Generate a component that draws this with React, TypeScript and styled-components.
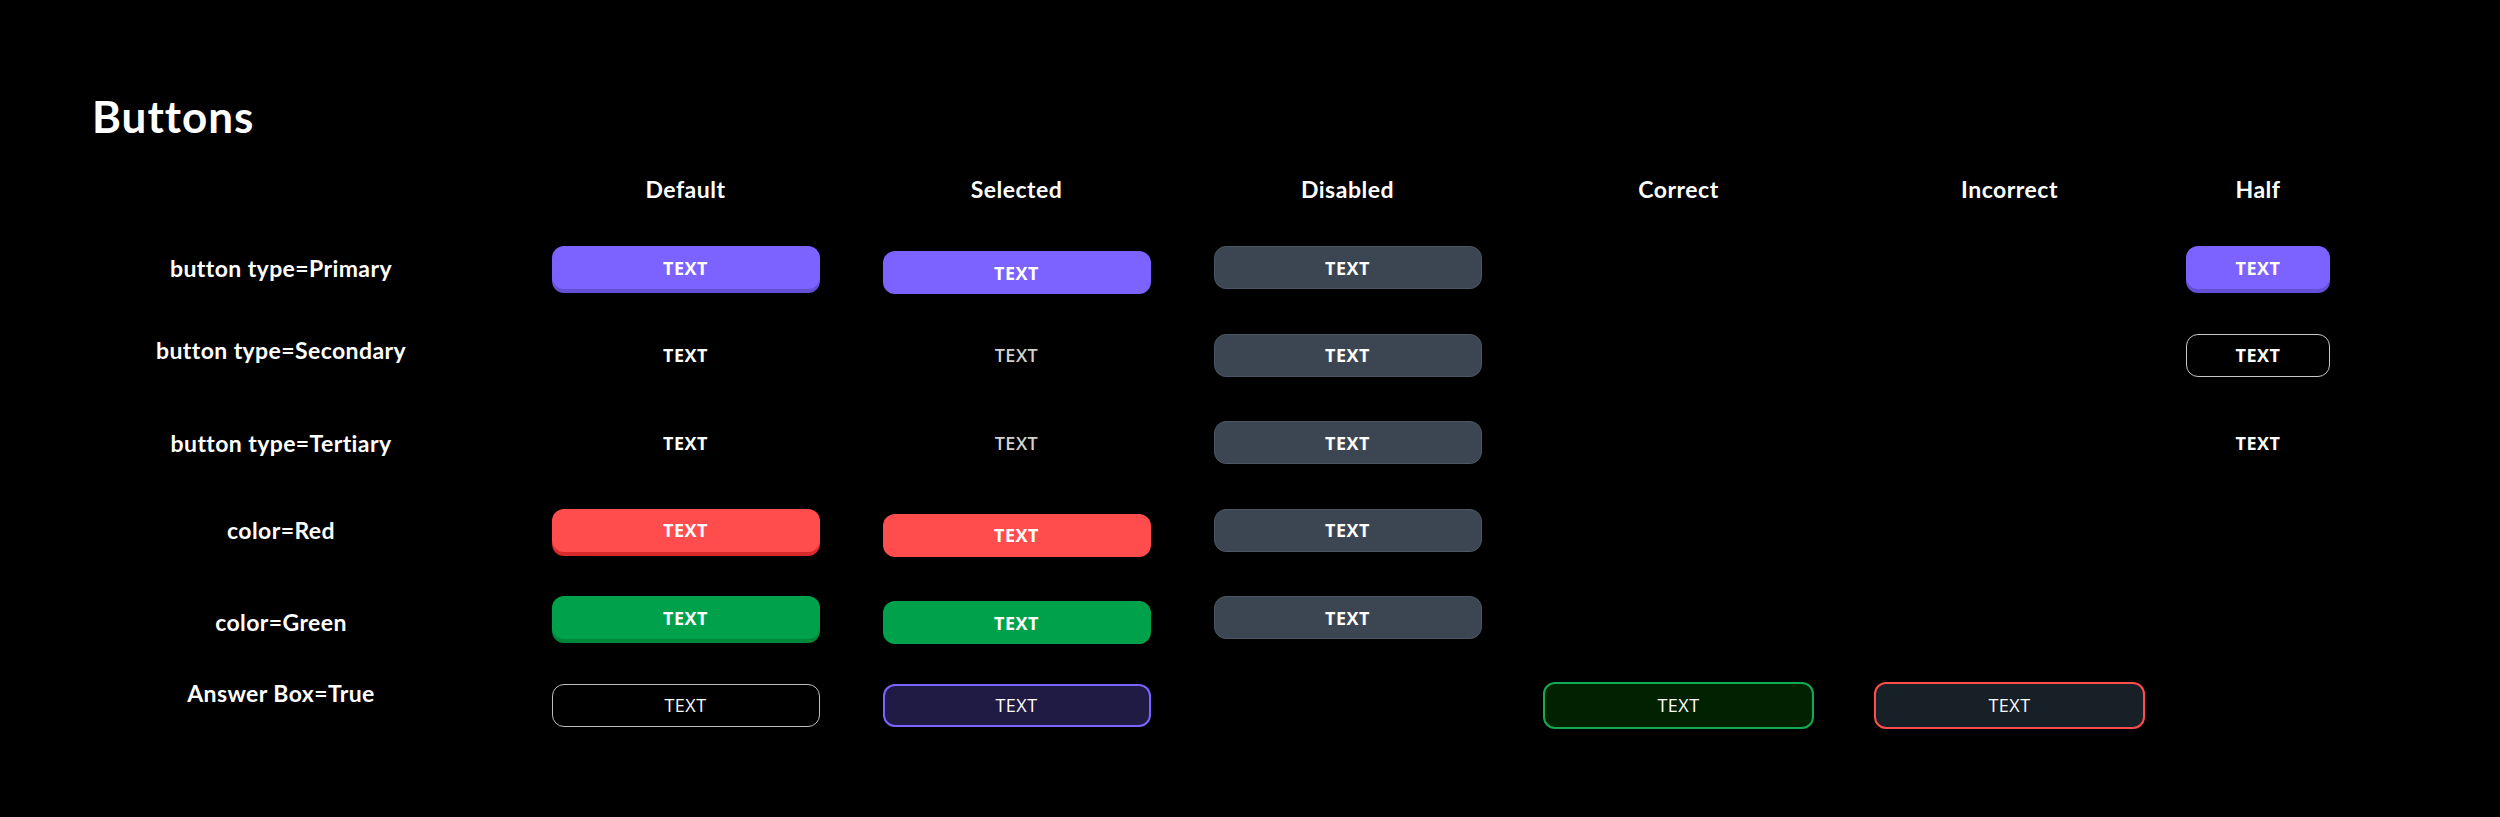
import { Fragment } from 'react';
import styled, { createGlobalStyle, css } from 'styled-components';

const GlobalStyle = createGlobalStyle`
  html, body {
    margin: 0;
    padding: 0;
    background: #000;
  }
  body {
    font-family: Lato, "Noto Sans", sans-serif;
    color: #fff;
  }
`;

type Tone = 'primary' | 'red' | 'green';
type Variant =
  | 'solid'
  | 'pressed'
  | 'disabled'
  | 'ghost'
  | 'ghostSelected'
  | 'outline'
  | 'answer'
  | 'answerSelected'
  | 'answerCorrect'
  | 'answerIncorrect';

const tones: Record<Tone, { face: string; edge: string }> = {
  primary: { face: '#7c63ff', edge: '#6450d4' },
  red: { face: '#ff4d4d', edge: '#d82a2a' },
  green: { face: '#00a14b', edge: '#00883a' },
};

const Page = styled.div`
  width: 2500px;
  min-height: 817px;
  padding-top: 94px;
  box-sizing: border-box;
`;

const Title = styled.h1`
  margin: 0 0 16px 92px;
  font-size: 44px;
  line-height: 44px;
  font-weight: 700;
  letter-spacing: 1px;
`;

const Grid = styled.div`
  margin-left: 42px;
  display: grid;
  grid-template-columns: 478px repeat(5, 331px) 166px;
  grid-template-rows: 70px repeat(6, 87.5px);
  align-items: center;
  justify-items: center;
`;

const ColumnHead = styled.div`
  font-size: 23px;
  font-weight: 700;
  letter-spacing: 0.5px;
`;

const RowLabel = styled.div<{ $shift?: number }>`
  font-size: 23px;
  font-weight: 700;
  letter-spacing: 0.4px;
  margin-bottom: ${p => (p.$shift ?? 0) * 2}px;
`;

const Cell = styled.div``;

const Button = styled.div<{ $variant: Variant; $tone?: Tone; $half?: boolean }>`
  box-sizing: border-box;
  width: ${p => (p.$half ? '144px' : '268px')};
  height: 43px;
  border-radius: 12px;
  display: flex;
  align-items: center;
  justify-content: center;
  font-family: "Open Sans", "Noto Sans", sans-serif;
  font-size: 18px;
  font-weight: 700;
  letter-spacing: 0.5px;
  color: #fff;

  ${p => {
    const t = tones[p.$tone ?? 'primary'];
    switch (p.$variant) {
      case 'solid':
        return css`
          background: ${t.face};
          box-shadow: 0 4px 0 ${t.edge};
        `;
      case 'pressed':
        return css`
          background: ${t.face};
          transform: translateY(5px);
        `;
      case 'disabled':
        return css`
          background: #3b4652;
          border: 1px solid #4a5663;
        `;
      case 'ghost':
        return css`
          background: transparent;
        `;
      case 'ghostSelected':
        return css`
          background: transparent;
          color: #d2d2d2;
          font-weight: 600;
        `;
      case 'outline':
        return css`
          background: #000;
          border: 1px solid #c8c8c8;
        `;
      case 'answer':
        return css`
          font-weight: 400;
          background: #000;
          border: 1px solid #bdbdbd;
        `;
      case 'answerSelected':
        return css`
          font-weight: 400;
          background: #201b45;
          border: 2px solid #7b63ff;
        `;
      case 'answerCorrect':
        return css`
          font-weight: 400;
          width: 271px;
          height: 47px;
          background: #012200;
          border: 2.5px solid #12ab4f;
        `;
      case 'answerIncorrect':
        return css`
          font-weight: 400;
          width: 271px;
          height: 47px;
          background: #172027;
          border: 2.5px solid #ff4d4d;
        `;
    }
  }}
`;

const columns = ['Default', 'Selected', 'Disabled', 'Correct', 'Incorrect', 'Half'];

interface Spec {
  variant: Variant;
  tone?: Tone;
}

interface RowSpec {
  label: string;
  // how far the label sits above the row's centre line
  shift?: number;
  cells: (Spec | null)[];
}

const rows: RowSpec[] = [
  {
    label: 'button type=Primary',
    cells: [
      { variant: 'solid' },
      { variant: 'pressed' },
      { variant: 'disabled' },
      null,
      null,
      { variant: 'solid' },
    ],
  },
  {
    label: 'button type=Secondary',
    shift: 5,
    cells: [
      { variant: 'ghost' },
      { variant: 'ghostSelected' },
      { variant: 'disabled' },
      null,
      null,
      { variant: 'outline' },
    ],
  },
  {
    label: 'button type=Tertiary',
    cells: [
      { variant: 'ghost' },
      { variant: 'ghostSelected' },
      { variant: 'disabled' },
      null,
      null,
      { variant: 'ghost' },
    ],
  },
  {
    label: 'color=Red',
    cells: [
      { variant: 'solid', tone: 'red' },
      { variant: 'pressed', tone: 'red' },
      { variant: 'disabled' },
      null,
      null,
      null,
    ],
  },
  {
    label: 'color=Green',
    shift: -4,
    cells: [
      { variant: 'solid', tone: 'green' },
      { variant: 'pressed', tone: 'green' },
      { variant: 'disabled' },
      null,
      null,
      null,
    ],
  },
  {
    label: 'Answer Box=True',
    shift: 12,
    cells: [
      { variant: 'answer' },
      { variant: 'answerSelected' },
      null,
      { variant: 'answerCorrect' },
      { variant: 'answerIncorrect' },
      null,
    ],
  },
];

export default function App() {
  return (
    <Page>
      <GlobalStyle />
      <Title>Buttons</Title>
      <Grid>
        <Cell />
        {columns.map(c => (
          <ColumnHead key={c}>{c}</ColumnHead>
        ))}
        {rows.map(row => (
          <Fragment key={row.label}>
            <RowLabel $shift={row.shift}>{row.label}</RowLabel>
            {row.cells.map((spec, i) =>
              spec ? (
                <Button
                  key={i}
                  $variant={spec.variant}
                  $tone={spec.tone}
                  $half={i === 5}
                >
                  TEXT
                </Button>
              ) : (
                <Cell key={i} />
              )
            )}
          </Fragment>
        ))}
      </Grid>
    </Page>
  );
}
